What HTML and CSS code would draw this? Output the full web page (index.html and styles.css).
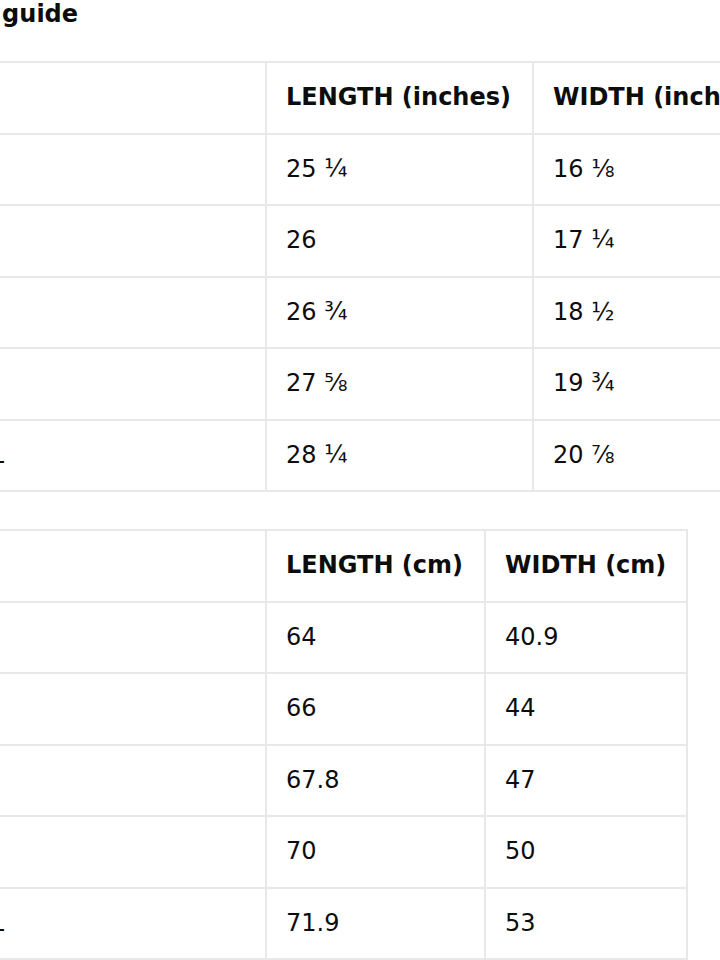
FILE: index.html
```html
<!DOCTYPE html>
<html lang="en">
<head>
<meta charset="utf-8">
<title>Size guide</title>
<link rel="stylesheet" href="styles.css">
</head>
<body>
<main class="page">
  <h1 class="title">Size guide</h1>
  <table class="sizes sizes-in">
    <colgroup>
      <col class="c-size">
      <col class="c-in-len">
      <col class="c-in-wid">
    </colgroup>
    <thead>
      <tr><th></th><th>LENGTH (inches)</th><th>WIDTH (inches)</th></tr>
    </thead>
    <tbody>
      <tr><td>S</td><td>25 ¼</td><td>16 ⅛</td></tr>
      <tr><td>M</td><td>26</td><td>17 ¼</td></tr>
      <tr><td>L</td><td>26 ¾</td><td>18 ½</td></tr>
      <tr><td>XL</td><td>27 ⅝</td><td>19 ¾</td></tr>
      <tr><td>2XL</td><td>28 ¼</td><td>20 ⅞</td></tr>
    </tbody>
  </table>
  <table class="sizes sizes-cm">
    <colgroup>
      <col class="c-size">
      <col class="c-cm-len">
      <col class="c-cm-wid">
    </colgroup>
    <thead>
      <tr><th></th><th>LENGTH (cm)</th><th>WIDTH (cm)</th></tr>
    </thead>
    <tbody>
      <tr><td>S</td><td>64</td><td>40.9</td></tr>
      <tr><td>M</td><td>66</td><td>44</td></tr>
      <tr><td>L</td><td>67.8</td><td>47</td></tr>
      <tr><td>XL</td><td>70</td><td>50</td></tr>
      <tr><td>2XL</td><td>71.9</td><td>53</td></tr>
    </tbody>
  </table>
</main>
</body>
</html>
```

FILE: styles.css
```css
html, body {
  margin: 0;
  padding: 0;
  background: #ffffff;
  overflow: hidden;
}

body {
  font-family: "DejaVu Sans", "Liberation Sans", sans-serif;
  color: #0d0d0d;
  font-size: 24px;
}

.page {
  margin-left: -62px;
  width: 900px;
}

.title {
  margin: 0 0 33px 0;
  font-size: 24px;
  line-height: 28px;
  font-weight: bold;
}

.sizes {
  border-collapse: collapse;
  table-layout: fixed;
  margin: 0 0 37px 0;
}

.sizes th,
.sizes td {
  border: 2px solid #e8e8e8;
  padding: 20px 20px 20px 19px;
  line-height: 29.5px;
  text-align: left;
  white-space: nowrap;
  vertical-align: middle;
}

.sizes th {
  font-weight: bold;
}

.sizes td {
  font-weight: normal;
}

.c-size { width: 327px; }
.c-in-len { width: 267px; }
.c-in-wid { width: 268px; }
.c-cm-len { width: 219px; }
.c-cm-wid { width: 201px; }
```
